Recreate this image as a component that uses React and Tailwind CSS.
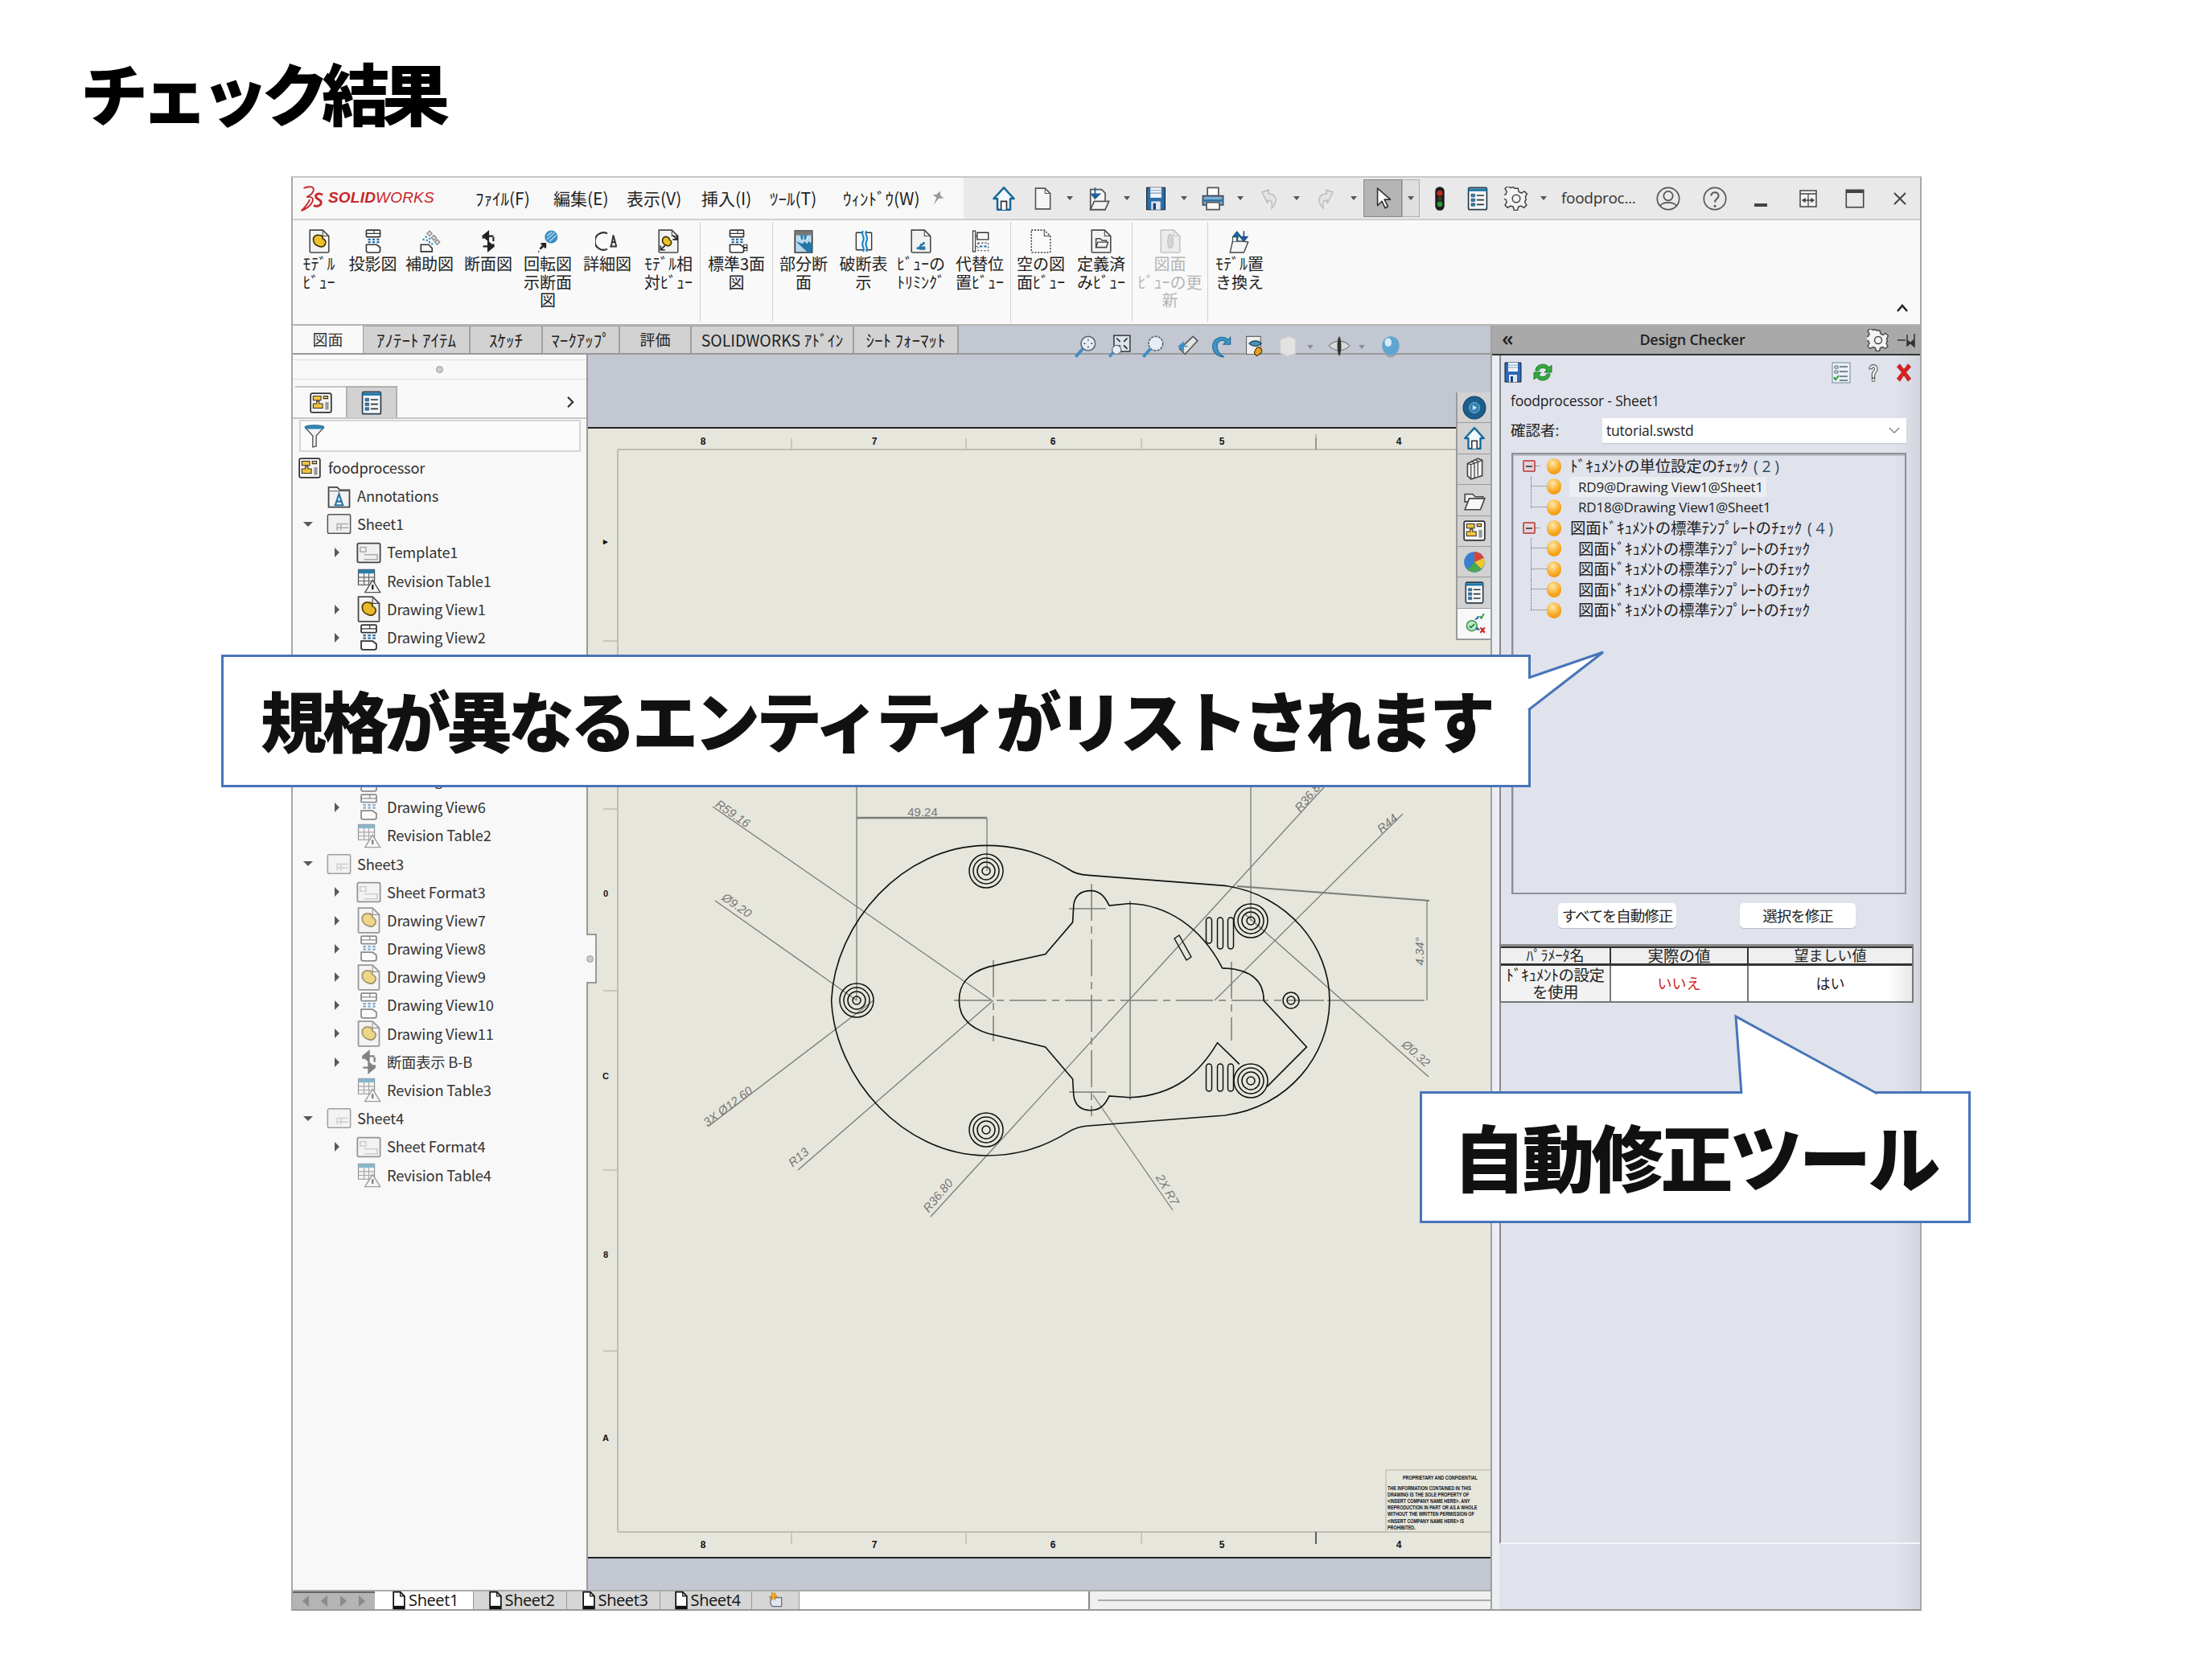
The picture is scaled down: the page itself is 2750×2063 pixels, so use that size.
import { Fragment } from 'react';

// toolbar and tree pictures, all drawn on a 28x28 grid
const docPath = 'M3 1h15l7 7v18a1 1 0 0 1-1 1H4a1 1 0 0 1-1-1z';
const blob = 'M7 12c0-4 4-6 7-5 3 0 4 2 4 4 3 1 4 4 3 6-1 3-4 4-7 3-4-1-7-4-7-8z';
const Doc = ({ fill = '#f2f2f2', stroke = '#4a4a4a', dash }) => (
    <>
        <path d={docPath} fill={fill} stroke={stroke} strokeWidth="1.5" strokeDasharray={dash} />
        <path d="M18 1v7h7" fill="none" stroke={stroke} strokeWidth="1" />
    </>
);
const ProjShape = ({ dash }) => (
    <>
        <rect x="6" y="1" width="16" height="8" rx="1" fill="#fff" stroke="#333" strokeWidth="1.5" strokeDasharray={dash} />
        <path d="M6 5h16M15 1v4" stroke="#333" strokeWidth="1" />
        <path d="M8 12h3M13 12h3M18 12h3M8 15h3M13 15h3M18 15h3" stroke="#2b6ea8" strokeWidth="2" />
        <path d="M6 18h12l4 3v4a2 2 0 0 1-2 2H8a2 2 0 0 1-2-2z" fill="#fff" stroke="#333" strokeWidth="1.5" strokeDasharray={dash} />
    </>
);
const SectionShape = () => (
    <>
        <path d="M20 8H12M14 3 8 8l6 5z" fill="#222" stroke="#222" strokeWidth="2" />
        <path d="M8 20h8M14 15l6 5-6 5z" fill="#222" stroke="#222" strokeWidth="2" />
        <path d="M20 9v5M20 17v3M8 9v2" stroke="#222" strokeWidth="2" />
    </>
);
const AssemblyMark = () => (
    <>
        <rect x="2" y="3" width="24" height="22" rx="2" fill="#f4f4f4" stroke="#333" strokeWidth="1.6" />
        <path d="M5 6h9v5H5zM17 6h5v3h-5z" fill="#f3c33c" stroke="#333" strokeWidth="1" />
        <path d="M9 12h3v3h4v5H5v-5h4z" fill="#f3c33c" stroke="#333" strokeWidth="1" />
        <path d="M19 13h4v9h-4z" fill="#999" />
    </>
);
const ListMark = () => (
    <>
        <rect x="4" y="2" width="20" height="24" rx="1.5" fill="#f4f7fa" stroke="#2c3e50" strokeWidth="1.5" />
        <path d="M4 3h20v3H4z" fill="#1f77a8" />
        <path d="M7 9h4v3H7zM7 14h4v3H7zM7 19h4v3H7z" fill="#2f7fb5" stroke="#234" strokeWidth=".5" />
        <path d="M13 10.500h8M13 15.500h8M13 20.500h8" stroke="#333" strokeWidth="1.5" />
    </>
);
const Floppy = ({ blue }) => (
    <>
        <path d="M4 2h20v24H4z" fill={blue ? '#2d69b8' : '#2e6fa8'} stroke="#123" strokeWidth="1" />
        <path d="M8 2h12v11H8z" fill="#f2f6fb" />
        <path d="M8 5h12M8 8h12" stroke="#7d9bc0" strokeWidth="1" />
        <path d="M9 17h10v9H9z" fill="#dfe7f1" />
        <path d="M11 19h3v7h-3z" fill="#1c3f73" />
    </>
);
const GearShape = () => (
    <>
        <path d="M12 2h4l1 4 3 1.500 3.500-2 3 3-2 3.500L25.500 15l0 0 0 0 .5 0-1 .5-1 2.500 2 3.500-3 3-3.500-2-3 1-1 4h-4l-1-4-3-1-3.500 2-3-3 2-3.500-1-3-4-1v-4l4-1 1-3-2-3.500 3-3 3.500 2 3-1z" fill="#f3f3f3" stroke="#444" strokeWidth="1.4" />
        <circle cx="14" cy="14" r="4.500" fill="#f3f3f3" stroke="#444" strokeWidth="1.4" />
    </>
);

const ICONS = {
    model: <><Doc /><path d={blob} fill="#edc02a" stroke="#3a2c00" strokeWidth="1.500" /></>,
    proj: <ProjShape />,
    aux: <><path d="M14 2l3 3-3 3-3-3zM19 7l3 3-3 3-3-3zM23 12l3 3-3 3-3-3z" fill="#ddd" stroke="#777" /><path d="M9 9h2M6 12h2M10 13h2M13 11h2M13 15h2M16 17h2" stroke="#2b85b8" strokeWidth="2" /><path d="M4 18h9l4 4v4H4z" fill="#f7f7f7" stroke="#333" strokeWidth="1.500" /></>,
    section: <SectionShape />,
    rotate: <><circle cx="18" cy="9" r="7.500" fill="#3c8ec4" /><path d="M13 8l6-5M13 12l9-8M16 14l8-7" stroke="#bfe0f3" strokeWidth="1.200" /><path d="M11 17l-6 6M6 17h5v5" fill="none" stroke="#222" strokeWidth="2.500" /><path d="M3 26h2" stroke="#222" strokeWidth="2" strokeDasharray="1 1" /></>,
    detail: <><path d="M14 5a10 10 0 1 0 0 18" fill="none" stroke="#333" strokeWidth="2" /><path d="M17 20h8M18.500 20 21 7l3.500 13M19.500 15h4" fill="none" stroke="#333" strokeWidth="1.800" /></>,
    relative: <><Doc /><path d="M7 13c0-3 3-5 5-4 2 0 3 2 3 3 2 1 3 3 2 5-1 2-3 3-5 2-3-1-5-3-5-6z" fill="#edc02a" stroke="#3a2c00" strokeWidth="1.500" /><path d="M19 7l5 5M24 7v5h-5M5 24l5-5M5 19v5h5" fill="none" stroke="#222" strokeWidth="1.500" /></>,
    std3: <><ProjShape /><path d="M22 18h4v3h-4zM22 22h4v3h-4z" fill="none" stroke="#333" /></>,
    broken: <><path d="M4 2h20v25H4z" fill="#b9d8ea" stroke="#333" strokeWidth="1.500" /><path d="M4 2h20v5H4z" fill="#777" /><path d="M9 7h10l-2 5h-6z" fill="#2b7fb0" /><path d="M5 14l14 13h5V17l-4-3-2 3-3-3-2 3z" fill="#2576a8" /><path d="M10 8v4M14 8v4M18 8v4" stroke="#fff" /></>,
    brk: <><path d="M5 4h8M5 24h8M16 4h7M16 24h7M5 4v20M23 4v20" fill="none" stroke="#333" strokeWidth="1.300" /><path d="M13 2c-3 4 3 7 0 12s3 8 0 12M17 2c-3 4 3 7 0 12s3 8 0 12" fill="none" stroke="#1e88c4" strokeWidth="2" /></>,
    crop: <><Doc /><path d="M9 22h4v-4h4v-4" fill="none" stroke="#2374ab" strokeWidth="2.500" strokeDasharray="3 1" /><path d="M12 20h7v4h-7z" fill="#2374ab" /></>,
    alt: <><path d="M6 2h3v24H6z" fill="#eee" stroke="#333" /><path d="M11 4h13v8H11z" fill="#f7f7f7" stroke="#333" strokeWidth="1.300" /><path d="M9 8h2M9 20h2" stroke="#333" /><path d="M12 16h12v9H12z" fill="#f7f7f7" stroke="#333" strokeDasharray="2 2" /><path d="M14 20h3M19 20h3" stroke="#2b7fb0" strokeWidth="2" /></>,
    empty: <Doc fill="#fafafa" dash="2 1.500" />,
    predefined: <><Doc /><path d="M8 11h5l2 2h5v8H8z" fill="#f5f5f5" stroke="#444" strokeWidth="1.300" /><path d="M8 21l2-6h12l-2 6z" fill="#f5f5f5" stroke="#444" strokeWidth="1.300" /></>,
    update: <><Doc stroke="#c6c6c6" fill="#ececec" /><path d="M14 6c2 0 3 3 3 8s-1 8-3 8-3-3-3-8 1-8 3-8z" fill="#d5d5d5" stroke="#bbb" /></>,
    replace: <><path d="M6 14h12l6 1-5 12H3z" fill="#f6f6f6" stroke="#444" strokeWidth="1.300" /><path d="M6 14V9h6v5" fill="#eee" stroke="#444" /><path d="M11 15V5M7 8l4-5 4 5z" fill="#2b7fb0" stroke="#1b5e85" strokeWidth="1.500" /><path d="M19 2v10M15 9l4 5 4-5z" fill="#3c6db5" stroke="#1b4c85" strokeWidth="1.500" /></>,
    home: <><path d="M14 2 3 14h4v12h14V14h4z" fill="#f2f7fb" stroke="#14689a" strokeWidth="2.200" strokeLinejoin="round" /><path d="M11 26v-9h6v9" fill="#fff" stroke="#333" strokeWidth="1.500" /></>,
    newdoc: <><path d="M6 2h11l6 6v18H6z" fill="#f6f6f6" stroke="#555" strokeWidth="1.500" /><path d="M17 2v6h6" fill="none" stroke="#555" /></>,
    open: <><path d="M5 4h12l4 4v18H5z" fill="#f7f7f7" stroke="#555" strokeWidth="1.500" /><path d="M10 2v10M6 9l4 5 5-5z" fill="#245f9e" stroke="#245f9e" strokeWidth="1.500" /><path d="M5 26l4-9h16l-4 9z" fill="#f4f4f4" stroke="#555" strokeWidth="1.500" /></>,
    save: <Floppy />,
    print: <><path d="M8 2h12v9H8z" fill="#fff" stroke="#555" strokeWidth="1.500" /><path d="M3 11h22v10H3z" fill="#76b0d4" stroke="#445" strokeWidth="1.500" /><path d="M3 16h22" stroke="#2f6d9c" strokeWidth="2" /><path d="M7 18h14v8H7z" fill="#f8f8f8" stroke="#555" strokeWidth="1.500" /></>,
    undo: <path d="M6 6l8-3v5c6 0 10 4 9 9-1 4-3 7-5 9 1-7 0-10-5-10v4z" fill="#e4e4e4" stroke="#bdbdbd" strokeWidth="1.500" />,
    redo: <path d="M22 6l-8-3v5c-6 0-10 4-9 9 1 4 3 7 5 9-1-7 0-10 5-10v4z" fill="#e4e4e4" stroke="#bdbdbd" strokeWidth="1.500" />,
    cursor: <path d="M8 2v20l5-5 4 8 3-2-4-8h7z" fill="#fdfdfd" stroke="#333" strokeWidth="1.500" strokeLinejoin="round" />,
    traffic: <><rect x="9" y="1" width="10" height="26" rx="5" fill="#1c1c1c" /><circle cx="14" cy="8" r="3" fill="#c8281e" /><circle cx="14" cy="14" r="2.500" fill="#3a3a1a" /><circle cx="14" cy="20" r="3" fill="#2a9a3a" /></>,
    list: <ListMark />,
    gear: <GearShape />,
    user: <><circle cx="14" cy="14" r="12" fill="none" stroke="#555" strokeWidth="1.500" /><circle cx="14" cy="11" r="5" fill="none" stroke="#555" strokeWidth="1.500" /><path d="M5 22c3-5 15-5 18 0" fill="none" stroke="#555" strokeWidth="1.500" /></>,
    help: <><circle cx="14" cy="14" r="12" fill="none" stroke="#555" strokeWidth="1.500" /><path d="M10 11c0-5 8-5 8 0 0 3-4 3-4 7" fill="none" stroke="#555" strokeWidth="1.800" /><circle cx="14" cy="22" r="1.300" fill="#555" /></>,
    split: <><rect x="4" y="4" width="20" height="20" fill="#f3f3f3" stroke="#444" strokeWidth="1.500" /><path d="M4 8h20M14 8v16M7 16h14M7 16l3-2v4zM21 16l-3-2v4z" stroke="#444" strokeWidth="1.300" /></>,
    maxi: <><rect x="4" y="4" width="20" height="20" fill="none" stroke="#444" strokeWidth="1.500" /><path d="M4 6h20" stroke="#444" strokeWidth="3" /></>,
    pin: <path d="M18 2l2 8 5 3-9 1-7 10 4-12-6-4 7-1z" fill="#9a9a9a" />,
    zoomFit: <><circle cx="17" cy="11" r="8" fill="#e6edf5" stroke="#5b6b7a" strokeWidth="1.500" /><path d="M11 17 3 26" stroke="#3f8fc4" strokeWidth="3.500" /><path d="M17 6v2M17 14v2M12 11h2M20 11h2" stroke="#555" strokeWidth="1.300" /></>,
    zoomBox: <><rect x="8" y="2" width="18" height="18" fill="#dde4ec" stroke="#444" strokeWidth="1.500" /><path d="M11 5l4 4M23 5l-4 4M11 17l4-4M23 17l-4-4" stroke="#222" strokeWidth="1.500" /><circle cx="11" cy="18" r="5" fill="#e6edf5" stroke="#5b6b7a" /><path d="M7 21l-4 5" stroke="#3f8fc4" strokeWidth="3" /></>,
    zoomSel: <><circle cx="17" cy="11" r="8" fill="#e6edf5" stroke="#5b6b7a" strokeWidth="1.500" strokeDasharray="3 1" /><path d="M11 17 3 26" stroke="#3f8fc4" strokeWidth="3.500" /></>,
    prev: <><path d="M21 3l5 5-14 15-6-6z" fill="#e5e5e5" stroke="#555" strokeWidth="1.400" /><path d="M15 14H6M10 10l-5 4 5 5z" fill="#3f8fc4" stroke="#3f8fc4" strokeWidth="1.500" /></>,
    rebuild: <path d="M23 7C15 0 5 6 5 14s7 12 13 12c-6-3-8-7-8-12s5-9 10-5l-3 3h8V4z" fill="#3d97c9" stroke="#1f6a96" strokeWidth="1" />,
    display: <><path d="M5 3h16v20H5z" fill="#eee" stroke="#666" /><path d="M8 11c4-4 10-4 14 0-4 4-10 4-14 0z" fill="#4a8fbf" stroke="#245" /><path d="M18 15c4 1 5 3 4 6l-5 4c-2-1-3-2-3-4 1-3 2-5 4-6z" fill="#e0a526" stroke="#5a3c00" /></>,
    cube: <path d="M5 7l10-4 8 3v17l-10 3-8-4z" fill="#e2e2e2" stroke="#cfcfcf" strokeWidth="1.500" />,
    eye: <><path d="M2 14c6-7 18-7 24 0-6 7-18 7-24 0z" fill="#d9d9d9" stroke="#777" /><path d="M14 3c3 3 3 19 0 23-3-4-3-20 0-23z" fill="#333" /></>,
    globe: <><ellipse cx="14" cy="13" rx="10" ry="11" fill="#5fa5cf" /><ellipse cx="11" cy="9" rx="4" ry="5" fill="#d6eaf5" /><path d="M9 23c3 3 7 3 10 0" stroke="#8fa0ad" strokeWidth="2" fill="none" /></>,
    rail1: <><circle cx="14" cy="14" r="13" fill="#1c5f8c" stroke="#0d3d5e" strokeWidth="1" /><circle cx="14" cy="14" r="6" fill="#2f7fb0" stroke="#8fc4e2" strokeWidth=".8" /><path d="M12 11l5 3-5 3z" fill="#cfe6f3" /></>,
    rail3: <><path d="M6 8l12-6 5 2v18l-13 4-4-4z" fill="#f3f3f3" stroke="#444" strokeWidth="1.500" /><path d="M10 9v17M14 7v17M18 5v17M6 8l4 1 13-5M10 5l4 2M14 3l4 2" fill="none" stroke="#444" strokeWidth="1.200" /></>,
    rail4: <><path d="M3 7h9l3 3h9v6H3z" fill="#eee" stroke="#444" strokeWidth="1.500" /><path d="M3 25l5-13h18l-5 13z" fill="#f7f7f7" stroke="#444" strokeWidth="1.500" /></>,
    annot: <><path d="M3 5h9l3 3h10v18H3z" fill="#f2f2f2" stroke="#444" strokeWidth="1.500" /><path d="M3 9h22" stroke="#777" /><path d="M9 24h10M10 24l4-12 4 12M11.500 20h5" fill="none" stroke="#2474a8" strokeWidth="1.800" /></>,
    rail6: <><circle cx="14" cy="14" r="12" fill="#3b7fd0" /><path d="M14 14V2a12 12 0 0 1 11 7z" fill="#d9443a" /><path d="M14 14l11-5a12 12 0 0 1-3 13z" fill="#f2c72c" /><path d="M14 14l8 8a12 12 0 0 1-16 1z" fill="#4aa84c" /></>,
    rail8: <><circle cx="11" cy="17" r="6" fill="#bfe6c4" stroke="#3f9a52" strokeWidth="1.500" /><path d="M8 17l2 2 4-4" fill="none" stroke="#1e7a34" strokeWidth="1.500" /><path d="M15 10l4-4M18 6v3M20 22l-3-3M17 22v-3" stroke="#2458b8" strokeWidth="1.500" /><path d="M20 6l2 2 3-5" fill="none" stroke="#2c9a3a" strokeWidth="1.800" /><path d="M21 19l5 6M26 19l-5 6" stroke="#d2201c" strokeWidth="2" /></>,
    funnel: <><path d="M3 4c0-3 22-3 22 0L16 14v12l-4 1V14z" fill="#f3f3f3" stroke="#555" strokeWidth="1.300" /><path d="M3 3c3-2 19-2 22 0v3H3z" fill="#2d86b3" /></>,
    sheet: <><rect x="2" y="4" width="24" height="20" rx="1.500" fill="#f0f0f0" stroke="#555" strokeWidth="1.300" /><path d="M12 21v-7h12M16 14v7M12 18h12" fill="none" stroke="#aaa" strokeWidth="1.200" /></>,
    tmpl: <><rect x="2" y="4" width="24" height="20" rx="1.500" fill="#f0f0f0" stroke="#444" strokeWidth="1.500" /><path d="M5 8h6v5h-6zM9 21h14v-5H9" fill="none" stroke="#aaa" strokeWidth="1.300" /></>,
    revtab: <><path d="M3 2h17v16H3z" fill="#f2f2f2" stroke="#444" /><path d="M3 2h17v4H3z" fill="#2d7fa8" /><path d="M3 10h17M3 14h17M9 6v12M14 6v12" stroke="#666" /><path d="M18 13l8 13H10z" fill="#f7f7f7" stroke="#555" strokeWidth="1.200" /><path d="M18 18v5" stroke="#222" strokeWidth="2" /></>,
    dview: <><Doc /><path d={blob} fill="#e8b92a" stroke="#5a4300" strokeWidth="1.500" /></>,
    saveBlue: <Floppy blue />,
    refresh: <><path d="M5 12C5 4 17 1 22 8l3-3v9h-9l3-3C16 7 10 8 9 12z" fill="#35a83e" stroke="#1c7a28" /><path d="M23 16c0 8-12 11-17 4l-3 3v-9h9l-3 3c3 4 9 3 10-1z" fill="#35a83e" stroke="#1c7a28" /></>,
    checkList: <><rect x="3" y="2" width="22" height="25" fill="#e8f0f6" stroke="#789" strokeWidth="1" /><path d="M6 6h4v3H6zM6 12h4v3H6z" fill="none" stroke="#566" /><path d="M12 7h10M12 13h10M12 19h10M12 24h10" stroke="#567" strokeWidth="1.300" /><path d="M5 20l2 3 4-5" fill="none" stroke="#2c9a3a" strokeWidth="2" /></>,
    question: <><path d="M8 9c0-8 12-8 12 0 0 5-4 5-4 9v4h-4v-6c0-3 4-4 4-7 0-3-4-3-4 0z" fill="#f5f5f5" stroke="#555" strokeWidth="1.300" /><rect x="12" y="23" width="4" height="4" fill="#f5f5f5" stroke="#555" /></>,
    cross: <path d="M4 6l4-4 6 8 6-8 4 4-7 8 7 9-4 4-6-9-6 9-4-4 7-9z" fill="#e01f1f" stroke="#9b1010" strokeWidth=".8" />,
    pageTab: <><path d="M6 2h10l6 6v18H6z" fill="#fff" stroke="#111" strokeWidth="2" /><path d="M16 2v6h6" fill="none" stroke="#111" strokeWidth="1.500" /><path d="M6 22h16v4H6z" fill="#111" /></>,
    newTab: <><path d="M7 10h16v13H10l-3-3z" fill="#dfe7ef" stroke="#667" strokeWidth="1.400" /><path d="M9 2l2 3 3-2-1 4 4 1-4 2 1 4-3-3-3 3 1-4-4-1 4-2z" fill="#f2a818" stroke="#c46f00" strokeWidth=".7" /></>
};

function Icon({ name, className = 'w-[30px] h-[30px]' }) {
    return (
        <svg viewBox="0 0 28 28" className={`${className} shrink-0`}>
            {name === 'assembly' ? <AssemblyMark /> : ICONS[name]}
        </svg>
    );
}

const Caret = ({ className = '' }) => (
    <span className={`w-0 h-0 border-x-[4px] border-x-transparent border-t-[5px] border-t-[#555] ${className}`} />
);

const MENU = [
    ['ﾌｧｲﾙ(F)', 'w-[97px]'],
    ['編集(E)', 'w-[91px]'],
    ['表示(V)', 'w-[93px]'],
    ['挿入(I)', 'w-[85px]'],
    ['ﾂｰﾙ(T)', 'w-[91px]'],
    ['ｳｨﾝﾄﾞｳ(W)', 'w-[118px]']
];

const RIBBON = [
    [
        ['model', ['ﾓﾃﾞﾙ', 'ﾋﾞｭｰ'], 'w-[65px]'],
        ['proj', ['投影図'], 'w-[69px]'],
        ['aux', ['補助図'], 'w-[72px]'],
        ['section', ['断面図'], 'w-[74px]'],
        ['rotate', ['回転図', '示断面', '図'], 'w-[74px]'],
        ['detail', ['詳細図'], 'w-[74px]'],
        ['relative', ['ﾓﾃﾞﾙ相', '対ﾋﾞｭｰ'], 'w-[78px]']
    ],
    [['std3', ['標準3面', '図'], 'w-[89px]']],
    [
        ['broken', ['部分断', '面'], 'w-[76px]'],
        ['brk', ['破断表', '示'], 'w-[73px]'],
        ['crop', ['ﾋﾞｭｰの', 'ﾄﾘﾐﾝｸﾞ'], 'w-[70px]'],
        ['alt', ['代替位', '置ﾋﾞｭｰ'], 'w-[76px]']
    ],
    [
        ['empty', ['空の図', '面ﾋﾞｭｰ'], 'w-[74px]'],
        ['predefined', ['定義済', 'みﾋﾞｭｰ'], 'w-[76px]']
    ],
    [['update', ['図面', 'ﾋﾞｭｰの更', '新'], 'w-[93px]', true]],
    [['replace', ['ﾓﾃﾞﾙ置', 'き換え'], 'w-[78px]']]
];

const TABS = [
    ['ｱﾉﾃｰﾄ ｱｲﾃﾑ', 'w-[133px] text-[21px]'],
    ['ｽｹｯﾁ', 'w-[90px] text-[21px]'],
    ['ﾏｰｸｱｯﾌﾟ', 'w-[96px] text-[21px]'],
    ['評価', 'w-[89px] text-[19px]'],
    ['SOLIDWORKS ｱﾄﾞｲﾝ', 'w-[202px] text-[19.500px]'],
    ['ｼｰﾄ ﾌｫｰﾏｯﾄ', 'w-[130px] text-[21px]']
];

// depth, caret, icon, label, faded
const TREE_TOP = [
    [0, false, 'assembly', 'foodprocessor'],
    [1, false, 'annot', 'Annotations'],
    [1, 'down', 'sheet', 'Sheet1'],
    [2, 'right', 'tmpl', 'Template1'],
    [2, false, 'revtab', 'Revision Table1'],
    [2, 'right', 'dview', 'Drawing View1'],
    [2, 'right', 'proj', 'Drawing View2']
];
const TREE_BOTTOM = [
    [2, 'right', 'proj', 'Drawing View5', true],
    [2, 'right', 'proj', 'Drawing View6', true],
    [2, false, 'revtab', 'Revision Table2', true],
    [1, 'down', 'sheet', 'Sheet3', true],
    [2, 'right', 'tmpl', 'Sheet Format3', true],
    [2, 'right', 'dview', 'Drawing View7', true],
    [2, 'right', 'proj', 'Drawing View8', true],
    [2, 'right', 'dview', 'Drawing View9', true],
    [2, 'right', 'proj', 'Drawing View10', true],
    [2, 'right', 'dview', 'Drawing View11', true],
    [2, 'right', 'section', '断面表示 B-B', true],
    [2, false, 'revtab', 'Revision Table3', true],
    [1, 'down', 'sheet', 'Sheet4', true],
    [2, 'right', 'tmpl', 'Sheet Format4', true],
    [2, false, 'revtab', 'Revision Table4', true]
];

const TEMPLATE_CHECK = '図面ﾄﾞｷｭﾒﾝﾄの標準ﾃﾝﾌﾟﾚｰﾄのﾁｪｯｸ';
const CHECKS = [
    ['group', 'ﾄﾞｷｭﾒﾝﾄの単位設定のﾁｪｯｸ', '( 2 )'],
    ['item', 'RD9@Drawing View1@Sheet1', null, 'selected'],
    ['last', 'RD18@Drawing View1@Sheet1'],
    ['group', TEMPLATE_CHECK, '( 4 )'],
    ['item', TEMPLATE_CHECK],
    ['item', TEMPLATE_CHECK],
    ['item', TEMPLATE_CHECK],
    ['last', TEMPLATE_CHECK]
];

function TreeRow({ row }) {
    const [depth, caret, icon, label, faded] = row;
    return (
        <div className={`flex items-center h-[35.200px] ${depth === 0 ? 'pl-[7px]' : depth === 1 ? 'pl-[11px]' : 'pl-[48px]'}`}>
            {depth > 0 && (
                <span className="w-[30px] flex items-center justify-start pl-[2px]">
                    {caret === 'down' && <span className="w-0 h-0 border-x-[6px] border-x-transparent border-t-[6px] border-t-[#5a5a5a]" />}
                    {caret === 'right' && <span className="w-0 h-0 border-y-[6px] border-y-transparent border-l-[6px] border-l-[#5a5a5a] ml-[2px]" />}
                </span>
            )}
            <span className={`flex justify-center ${depth === 0 ? 'w-[28px] mr-[9px]' : 'w-[32px] mr-[7px]'} ${faded ? 'opacity-55' : ''}`}>
                <Icon name={icon} className={depth === 0 ? 'w-[30px] h-[30px]' : 'w-[33px] h-[33px]'} />
            </span>
            <span className="text-[18.300px] tracking-[-0.2px] text-[#333] whitespace-nowrap">{label}</span>
        </div>
    );
}

function CheckRow({ row }) {
    const [kind, label, count, selected] = row;
    const isGroup = kind === 'group';
    const latin = label.startsWith('RD');
    return (
        <div className="flex items-center h-[25.600px]">
            {isGroup ? (
                <span className="w-[42px] pl-[12px] flex items-center">
                    <span className="w-[16px] h-[15px] border-2 border-[#c45a5a] bg-[#e4d3d8] rounded-[2px] flex items-center justify-center">
                        <span className="w-[8px] h-[2px] bg-[#555]" />
                    </span>
                    <span className="w-[6px] border-t border-dotted border-[#777]" />
                </span>
            ) : (
                <span className="w-[42px] h-full pl-[22px]">
                    <span className={`block w-[20px] h-1/2 border-l border-b border-dotted border-[#666] ${kind === 'last' ? '' : 'relative after:absolute after:left-[-1px] after:top-full after:h-[13px] after:border-l after:border-dotted after:border-[#666]'}`} />
                </span>
            )}
            <span className="w-[18px] h-[20px] rounded-full bg-[radial-gradient(circle_at_40%_30%,#ffe9a8,#f7a51c_60%,#ea8a08)]" />
            <span className={`${isGroup ? 'ml-[11px]' : selected ? 'ml-[10px] pl-[11px] pr-[4px] h-full bg-[#eceef1] flex items-center' : 'ml-[21px]'} ${latin ? 'text-[17px]' : 'text-[19.500px]'} tracking-[-0.2px] text-[#222] whitespace-nowrap`}>
                {label}
                {count && <span className="ml-[7px] text-[#2f4a5e]">{count}</span>}
            </span>
        </div>
    );
}

// 図面シート: all lines and labels are the drawing itself
function SheetDrawing() {
    const edges = [874, 1087, 1309, 1519, 1739];
    const labels = ['8', '7', '6', '5', '4'];
    const sides = [[677, '▸'], [1115, '0'], [1342, 'C'], [1564, '8'], [1792, 'A']];
    const bosses = [[1226, 1083], [1226, 1405], [1065, 1244], [1555, 1145], [1555, 1344]];
    const slots = [[1503, 1141, 32], [1517, 1141, 39], [1530, 1141, 39], [1503, 1323, 34], [1517, 1323, 34], [1530, 1323, 34]];
    const leaders = [
        [1065, 979, 1065, 1244], [1555, 979, 1555, 1145], [1227, 1017, 1227, 1083], [886, 1003, 1233, 1244],
        [889, 1120, 1065, 1244], [880, 1401, 1086, 1244], [992, 1455, 1235, 1244], [1157, 1513, 1646, 979],
        [1510, 1244, 1744, 1012], [1547, 1136, 1776, 1339], [1359, 1362, 1458, 1505], [1774, 1120, 1774, 1244], [1771, 1244, 1650, 1244]
    ];
    const dims = [
        ['R59.16', 908, 1016, 35], ['Ø9.20', 913, 1130, 35], ['3X Ø12.60', 908, 1380, -37], ['R13', 996, 1443, -40],
        ['R36.80', 1170, 1490, -50], ['R36.80', 1632, 992, -50], ['R44', 1728, 1028, -40], ['Ø0.32', 1757, 1314, 42], ['2X R7', 1447, 1482, 60]
    ];
    const block = [
        'THE INFORMATION CONTAINED IN THIS', 'DRAWING IS THE SOLE PROPERTY OF', '<INSERT COMPANY NAME HERE>. ANY',
        'REPRODUCTION IN PART OR AS A WHOLE', 'WITHOUT THE WRITTEN PERMISSION OF', '<INSERT COMPANY NAME HERE> IS', 'PROHIBITED.'
    ];
    return (
        <svg viewBox="731 533 1122 1405" className="block w-[1122px] h-[1405px]">
            <path d="M768 559H1853M768 559V1905M768 1905H1853" fill="none" stroke="#bdbdb5" strokeWidth="2" />
            {[984, 1201, 1419, 1636].map((x) => (
                <Fragment key={x}>
                    <path d={`M${x} 545V559M${x} 1905V1920`} stroke={x === 1636 ? '#333' : '#bdbdb5'} strokeWidth="1.500" />
                </Fragment>
            ))}
            <path d="M1636 540V559" stroke="#a8a8a0" strokeWidth="1.500" />
            <path d="M750 797H768M750 1006H768M750 1232H768M750 1455H768M750 1680H768" stroke="#bdbdb5" strokeWidth="1.500" />
            {edges.map((x, i) => (
                <Fragment key={x}>
                    <text x={x} y="553" textAnchor="middle" fontSize="12" fontWeight="700" fill="#111" fontFamily="Liberation Sans">{labels[i]}</text>
                    <text x={x} y="1925" textAnchor="middle" fontSize="12" fontWeight="700" fill="#111" fontFamily="Liberation Sans">{labels[i]}</text>
                </Fragment>
            ))}
            {sides.map(([y, t]) => (
                <text key={y} x="753" y={y} textAnchor="middle" fontSize="11" fontWeight="700" fill="#111" fontFamily="Liberation Sans">{t}</text>
            ))}
            <g stroke="#7c7c78" strokeWidth="1.300">
                {leaders.map((l, i) => <line key={i} x1={l[0]} y1={l[1]} x2={l[2]} y2={l[3]} />)}
                <path d="M1065 1017H1227" strokeWidth="2.500" />
                <path d="M1538 1102L1777 1120" strokeWidth="2" />
            </g>
            <g stroke="#7c7c78" strokeWidth="1.500" strokeDasharray="46 7 9 7" fill="none">
                <path d="M1186 1244H1650" />
                <path d="M1235 1194V1295M1357 1099V1388M1531 1196V1294M1329 1130H1382M1329 1358H1382" />
                <path d="M1405 1120V1368" strokeDasharray="none" />
            </g>
            <g fill="none" stroke="#111" strokeWidth="1.600" transform="translate(850 970) scale(0.606 0.37)">
                <path vectorEffect="non-scaling-stroke" d="M303 741C310 480 450 222 620 220C690 220 740 250 790 300C800 312 810 318 830 320L1110 355C1240 385 1325 560 1325 741C1325 925 1240 1100 1110 1127L830 1162C810 1164 800 1172 790 1182C740 1232 690 1262 620 1262C450 1260 310 1000 303 741Z" />
                <path vectorEffect="non-scaling-stroke" d="M565 741C565 690 580 650 625 628L742 585L798 478L800 420C803 385 815 372 835 372C855 372 865 395 873 422L915 415C990 420 1060 490 1105 632C1160 635 1190 670 1190 741L1278 897L1197 1030M1140 955L1095 883C1060 980 1010 1060 915 1067L873 1062C865 1090 855 1110 835 1110C815 1110 803 1095 800 1060L798 1005L742 897L625 852C580 830 565 790 565 741" />
            </g>
            <g fill="none" stroke="#111" strokeWidth="1.500">
                {bosses.map(([x, y]) => (
                    <Fragment key={x + y}>
                        <circle cx={x} cy={y} r="21" />
                        <circle cx={x} cy={y} r="16" />
                        <circle cx={x} cy={y} r="11" />
                        <circle cx={x} cy={y} r="5" />
                    </Fragment>
                ))}
                <circle cx="1605" cy="1244" r="10" />
                <circle cx="1605" cy="1244" r="5" />
                {slots.map(([x, y, h]) => <rect key={x + y} x={x - 3.500} y={y} width="7" height={h} rx="3.500" />)}
                <path d="M1460 1167L1475 1194L1481 1190L1466 1163Z" strokeLinejoin="round" />
            </g>
            <g fontSize="15" fontFamily="Liberation Sans" fontStyle="italic" fill="#777">
                <text x="1147" y="1015" textAnchor="middle" fontStyle="normal">49.24</text>
                <text x="1770" y="1183" textAnchor="middle" transform="rotate(-90 1770 1183)">4.34°</text>
                {dims.map(([t, x, y, r], i) => (
                    <text key={i} x={x} y={y} textAnchor="middle" transform={`rotate(${r} ${x} ${y})`}>{t}</text>
                ))}
            </g>
            <path d="M1723 1905V1828H1853M1723 1905H1853" fill="none" stroke="#c2c2ba" strokeWidth="1.500" />
            <g fontFamily="Liberation Sans" fontWeight="700" fill="#111" fontSize="5.400">
                <text transform="translate(1744 1840) scale(1 1.500)">PROPRIETARY AND CONFIDENTIAL</text>
                {block.map((t, i) => (
                    <text key={t} transform={`translate(1725 ${1853 + i * 8.100}) scale(1 1.500)`}>{t}</text>
                ))}
            </g>
        </svg>
    );
}

function Callout({ className, children, tail, tailClass }) {
    return (
        <div className={`absolute bg-white border-[3px] border-[#4874b8] flex items-center justify-center font-black text-[#111] whitespace-nowrap ${className}`}>
            {children}
            <svg className={`absolute overflow-visible ${tailClass}`}>
                <polygon points={tail} fill="#fff" />
                <polyline points={tail} fill="none" stroke="#4874b8" strokeWidth="3" />
            </svg>
        </div>
    );
}

export default function App() {
    return (
        <div className="relative w-[2750px] h-[2063px] overflow-hidden bg-white font-['Noto_Sans_CJK_JP',sans-serif]">
            <div className="h-[219px] pl-[100px] pt-[64px]">
                <h1 className="text-[84px] leading-[100px] font-black tracking-[-9px] text-black">チェック結果</h1>
            </div>

            <div className="ml-[362px] w-[2027px] h-[1784px] border-2 border-t-[#c8c8c8] border-x-[#a8a8a8] border-b-[#9a9a9a] flex flex-col">
                {/* title bar */}
                <div className="h-[53px] flex border-b-2 border-[#cfcfcf]">
                    <div className="w-[834px] bg-[#f8f8f8] flex items-center">
                        <div className="w-[227px] pl-[6px] flex items-center">
                            <svg viewBox="0 0 34 36" className="w-[32px] h-[34px]">
                                <path d="M8 4c8-3 14-2 13 3-1 4-5 7-9 9 6-1 9 1 8 5-2 6-9 11-15 13 4-4 9-9 11-15" fill="none" stroke="#c8262c" strokeWidth="2" />
                                <path d="M33 13c-5-3-9-1-9 2 0 4 8 4 7 9-1 4-6 5-10 3" fill="none" stroke="#c8262c" strokeWidth="3" />
                            </svg>
                            <span className="ml-[6px] text-[19px] italic text-[#c8262c] font-['Liberation_Sans',sans-serif] tracking-[0.2px]">
                                <b>SOLID</b>WORKS
                            </span>
                        </div>
                        {MENU.map(([label, w]) => (
                            <span key={label} className={`${w} text-[21px] text-[#222] whitespace-nowrap`}>{label}</span>
                        ))}
                        <Icon name="pin" className="w-[22px] h-[22px] -ml-[12px]" />
                    </div>
                    <div className="flex-1 bg-[#e9e9e9] flex items-center pl-[34px]">
                        <Icon name="home" className="w-[32px] h-[32px]" />
                        <Icon name="newdoc" className="w-[30px] h-[30px] ml-[17px]" />
                        <Caret className="ml-[15px]" />
                        <Icon name="open" className="w-[32px] h-[32px] ml-[16px]" />
                        <Caret className="ml-[15px]" />
                        <Icon name="save" className="w-[32px] h-[32px] ml-[16px]" />
                        <Caret className="ml-[15px]" />
                        <Icon name="print" className="w-[32px] h-[32px] ml-[16px]" />
                        <Caret className="ml-[14px]" />
                        <Icon name="undo" className="w-[28px] h-[28px] ml-[17px]" />
                        <Caret className="ml-[17px]" />
                        <Icon name="redo" className="w-[28px] h-[28px] ml-[19px]" />
                        <Caret className="ml-[16px]" />
                        <span className="ml-[8px] w-[48px] h-[47px] bg-[#b5b5b5] border border-[#888] flex items-center justify-center">
                            <Icon name="cursor" className="w-[30px] h-[34px]" />
                        </span>
                        <span className="w-[22px] h-[47px] bg-[#dedede] border border-[#b0b0b0] flex items-center justify-center">
                            <Caret />
                        </span>
                        <Icon name="traffic" className="w-[32px] h-[32px] ml-[9px]" />
                        <Icon name="list" className="w-[32px] h-[32px] ml-[15px]" />
                        <Icon name="gear" className="w-[30px] h-[30px] ml-[17px]" />
                        <Caret className="ml-[15px]" />
                        <span className="ml-[18px] w-[117px] text-[19px] text-[#333] font-['Open_Sans',sans-serif] tracking-[-0.3px]">foodproc...</span>
                        <Icon name="user" className="w-[32px] h-[32px]" />
                        <Icon name="help" className="w-[32px] h-[32px] ml-[26px]" />
                        <span className="ml-[33px] w-[16px] h-[4px] mt-[16px] bg-[#444]" />
                        <Icon name="split" className="w-[28px] h-[28px] ml-[37px]" />
                        <Icon name="maxi" className="w-[30px] h-[30px] ml-[29px]" />
                        <svg viewBox="0 0 20 20" className="w-[20px] h-[20px] ml-[31px]">
                            <path d="M3 3l14 14M17 3L3 17" stroke="#444" strokeWidth="2" />
                        </svg>
                    </div>
                </div>

                {/* ribbon */}
                <div className="h-[131px] bg-[#f9f9f9] flex border-b-2 border-[#b4b4b4] relative pt-[2px]">
                    {RIBBON.map((group, g) => (
                        <div key={g} className={`h-[124px] flex ${g < RIBBON.length - 1 ? 'border-r border-[#d0d0d0]' : ''}`}>
                            {group.map(([icon, lines, w, disabled]) => (
                                <div key={icon} className={`${w} flex flex-col items-center pt-[9px]`}>
                                    <Icon name={icon} />
                                    <div className={`mt-[2px] text-[20px] leading-[22.500px] text-center whitespace-nowrap ${disabled ? 'text-[#b5b5b5]' : 'text-[#222]'}`}>
                                        {lines.map((l) => <div key={l}>{l}</div>)}
                                    </div>
                                </div>
                            ))}
                        </div>
                    ))}
                    <svg viewBox="0 0 16 12" className="absolute right-[14px] bottom-[14px] w-[16px] h-[12px]">
                        <path d="M2 10l6-7 6 7" fill="none" stroke="#222" strokeWidth="2.500" />
                    </svg>
                </div>

                <div className="flex-1 flex min-h-0">
                    {/* drawing area with feature tree */}
                    <div className="w-[1489px] flex flex-col">
                        <div className="h-[36px] flex bg-[#c3c7d2] border-b-2 border-[#999]">
                            <div className="w-[88px] bg-[#f9f9f9] text-[19px] text-[#333] flex items-center justify-center border-r border-[#999]">図面</div>
                            {TABS.map(([label, c]) => (
                                <div key={label} className={`${c} bg-[#d2d2d2] border-r-2 border-t border-[#a0a0a0] text-[#222] flex items-center justify-center whitespace-nowrap`}>
                                    {label}
                                </div>
                            ))}
                            <div className="relative z-10 flex-1 flex items-start gap-[11px] pl-[142px] pt-[10px]">
                                {['zoomFit', 'zoomBox', 'zoomSel', 'prev', 'rebuild', 'display'].map((n) => (
                                    <Icon key={n} name={n} className="w-[31px] h-[31px]" />
                                ))}
                                <Icon name="cube" className="w-[30px] h-[30px]" />
                                <Caret className="mt-[14px] -ml-[2px] opacity-50" />
                                <Icon name="eye" className="w-[30px] h-[30px] ml-[6px]" />
                                <Caret className="mt-[14px] -ml-[2px] opacity-50" />
                                <Icon name="globe" className="w-[30px] h-[32px] ml-[6px]" />
                            </div>
                        </div>

                        <div className="flex-1 flex min-h-0">
                            <div className="relative w-[367px] bg-[#f8f8f8] border-r-2 border-[#9a9a9a]">
                                <div className="h-[39px] pt-[6px]">
                                    <div className="h-[25px] mx-0 border-y border-[#dcdcdc] flex items-center justify-center">
                                        <span className="w-[9px] h-[9px] rounded-full bg-[#ccc] border border-[#999]" />
                                    </div>
                                </div>
                                <div className="h-[41px] flex items-stretch border-b-2 border-[#c6c6c6] pl-[3px] pr-[8px]">
                                    <div className="w-[63px] flex items-center justify-center border-t-2 border-[#c6c6c6]">
                                        <Icon name="assembly" className="w-[30px] h-[30px]" />
                                    </div>
                                    <div className="w-[64px] flex items-center justify-center bg-[#d2d2d2] border-2 border-b-0 border-[#b0b0b0]">
                                        <Icon name="list" className="w-[32px] h-[32px]" />
                                    </div>
                                    <div className="flex-1 flex items-center justify-end pr-[6px]">
                                        <svg viewBox="0 0 12 18" className="w-[11px] h-[16px]">
                                            <path d="M2 2l7 7-7 7" fill="none" stroke="#333" strokeWidth="2.500" />
                                        </svg>
                                    </div>
                                </div>
                                <div className="ml-[8px] w-[350px] h-[40px] mt-[1px] border-2 border-[#d6d6d6] bg-[#fbfbfb] flex items-center pl-[2px]">
                                    <Icon name="funnel" className="w-[30px] h-[30px]" />
                                </div>
                                <div className="mt-[2px]">
                                    {TREE_TOP.map((row) => <TreeRow key={row[3]} row={row} />)}
                                    {/* rows behind the callout */}
                                    <div className="h-[140.800px]" />
                                    {TREE_BOTTOM.map((row) => <TreeRow key={row[3]} row={row} />)}
                                </div>
                                <div className="absolute z-10 left-full top-[720px] w-[13px] h-[62px] bg-[#f8f8f8] border-2 border-l-0 border-[#9a9a9a] flex items-center">
                                    <span className="w-[9px] h-[9px] rounded-full bg-[#ccc] border border-[#999]" />
                                </div>
                            </div>

                            <div className="relative flex-1 flex flex-col bg-[#c3c7d2]">
                                <div className="h-[90px]" />
                                <div className="h-[1407px] bg-[#e6e6dd] border-y-2 border-[#222]">
                                    <SheetDrawing />
                                </div>
                                <div className="absolute right-0 top-[47px] w-[43px] flex flex-col border-l-2 border-[#9a9a9a]">
                                    {['rail1', 'home', 'rail3', 'rail4', 'assembly', 'rail6', 'list'].map((n) => (
                                        <div key={n} className="h-[38.400px] bg-[#d2d2d2] border-b border-[#9a9a9a] flex items-center justify-center">
                                            <Icon name={n} className="w-[30px] h-[32px]" />
                                        </div>
                                    ))}
                                    <div className="h-[39px] bg-[#f8f8f8] border-b-2 border-[#9a9a9a] flex items-center justify-center">
                                        <Icon name="rail8" className="w-[30px] h-[30px]" />
                                    </div>
                                </div>
                            </div>
                        </div>

                        {/* sheet tabs */}
                        <div className="h-[24px] flex bg-[#f0f0f0] border-t-2 border-[#aaa] text-[20px]">
                            <div className="w-[102px] bg-[#b4b4b4] border-t-2 border-[#666] flex items-center justify-around px-[4px]">
                                {['border-r-[8px] border-r-[#8a8a8a]', 'border-r-[8px] border-r-[#8a8a8a]', 'border-l-[8px] border-l-[#8a8a8a]', 'border-l-[8px] border-l-[#8a8a8a]'].map((c, i) => (
                                    <span key={i} className={`w-0 h-0 border-y-[7px] border-y-transparent ${c}`} />
                                ))}
                            </div>
                            {[['Sheet1', 'w-[123px] bg-white'], ['Sheet2', 'w-[116px] bg-[#d6d6d6]'], ['Sheet3', 'w-[116px] bg-[#d6d6d6]'], ['Sheet4', 'w-[114px] bg-[#d6d6d6]']].map(([label, c]) => (
                                <div key={label} className={`${c} border-r border-[#999] flex items-center justify-center text-[#111] font-['Open_Sans',sans-serif] tracking-[-0.4px] leading-none`}>
                                    <Icon name="pageTab" className="w-[24px] h-[24px]" />
                                    {label}
                                </div>
                            ))}
                            <div className="w-[59px] bg-[#d6d6d6] border-r border-[#999] flex items-center justify-center">
                                <Icon name="newTab" className="w-[24px] h-[24px]" />
                            </div>
                            <div className="w-[361px] bg-white border-r-2 border-[#888]" />
                            <div className="flex-1 pt-[10px] pl-[10px]">
                                <div className="border-t-2 border-[#aaa]" />
                            </div>
                        </div>
                    </div>

                    {/* Design Checker */}
                    <div className="flex-1 flex flex-col border-l-2 border-[#a0a0a0] bg-[#eceef3]">
                        <div className="h-[37px] bg-[#a9a9a9] border-b-2 border-[#333] flex items-center relative font-['Open_Sans',sans-serif]">
                            <span className="absolute left-[12px] top-[-2px] text-[26px] leading-[34px] text-[#222] font-semibold">«</span>
                            <span className="flex-1 pl-[32px] text-center text-[18px] font-semibold text-[#222] tracking-[-0.2px]">Design Checker</span>
                            <Icon name="gear" className="w-[28px] h-[28px] mr-[9px]" />
                            <svg viewBox="0 0 24 20" className="w-[24px] h-[20px] mr-[5px]">
                                <path d="M1 10h10M13 3v14l9-8V2v16l-9-8" fill="#333" stroke="#333" strokeWidth="1.500" />
                            </svg>
                        </div>
                        <div className="flex-1 flex flex-col pl-[9px]">
                            <div className="h-[1478px] border-l-2 border-b-2 border-l-[#888] border-b-[#f4f5f8] bg-[linear-gradient(to_right,#e0e3ec_94%,#d3d6de)] font-['Open_Sans','Noto_Sans_CJK_JP',sans-serif]">
                                <div className="h-[41px] flex items-center pl-[1px] pr-[8px]">
                                    <Icon name="saveBlue" className="w-[28px] h-[28px]" />
                                    <Icon name="refresh" className="w-[28px] h-[28px] ml-[9px]" />
                                    <span className="flex-1" />
                                    <Icon name="checkList" className="w-[28px] h-[28px]" />
                                    <Icon name="question" className="w-[24px] h-[28px] ml-[14px]" />
                                    <Icon name="cross" className="w-[24px] h-[26px] ml-[14px]" />
                                </div>
                                <div className="h-[30px] pl-[12px] flex items-center text-[17.500px] tracking-[-0.2px] text-[#222]">foodprocessor - Sheet1</div>
                                <div className="h-[38px] mt-[3px] pl-[12px] flex items-center text-[18.500px] text-[#222]">
                                    <span className="w-[114px]">確認者:</span>
                                    <div className="w-[378px] h-[31px] bg-white shadow-[0_1px_1px_#c4c7cf] flex items-center justify-between pl-[5px] pr-[8px] text-[17.500px] tracking-[-0.2px]">
                                        tutorial.swstd
                                        <svg viewBox="0 0 16 10" className="w-[14px] h-[9px]">
                                            <path d="M1 1l7 7 7-7" fill="none" stroke="#777" strokeWidth="1.300" />
                                        </svg>
                                    </div>
                                </div>
                                <div className="ml-[13px] mt-[9px] w-[491px] h-[549px] border-2 border-[#8e9096] pt-[2px] shadow-[inset_1px_2px_0_#b9bcc4]">
                                    {CHECKS.map((row, i) => <CheckRow key={i} row={row} />)}
                                </div>
                                <div className="flex mt-[11px] pl-[71px] gap-[79px] text-[18.500px] text-[#222]">
                                    <div className="w-[147px] h-[31px] bg-white rounded-[5px] shadow-[0_1px_1px_#b9bcc4] flex items-center justify-center tracking-[-1px]">すべてを自動修正</div>
                                    <div className="w-[144px] h-[31px] bg-white rounded-[5px] shadow-[0_1px_1px_#b9bcc4] flex items-center justify-center tracking-[-1px]">選択を修正</div>
                                </div>
                                <div className="mt-[20px] -ml-[2px] w-[515px] border-t-[3px] border-x-2 border-b-2 border-[#777] border-t-[#8a8a8a] grid grid-cols-[137px_171px_203px] text-[#222] bg-white">
                                    <div className="h-[24px] bg-[#efefef] border-t-2 border-b-[3px] border-[#333] border-r-2 border-r-[#333] text-[18px] flex items-center justify-center">ﾊﾟﾗﾒｰﾀ名</div>
                                    <div className="h-[24px] bg-[#efefef] border-t-2 border-b-[3px] border-[#333] border-r-2 border-r-[#333] text-[19.500px] flex items-center justify-center">実際の値</div>
                                    <div className="h-[24px] bg-[#efefef] border-t-2 border-b-[3px] border-[#333] text-[18px] flex items-center justify-center">望ましい値</div>
                                    <div className="h-[44px] bg-[#f2f2f2] border-r-2 border-[#777] text-[19.500px] leading-[21px] flex flex-col items-center justify-center tracking-[-0.5px]">
                                        <span>ﾄﾞｷｭﾒﾝﾄの設定</span>
                                        <span>を使用</span>
                                    </div>
                                    <div className="h-[44px] border-r-2 border-[#777] text-[18px] text-[#d01c1c] flex items-center justify-center">いいえ</div>
                                    <div className="h-[44px] bg-[linear-gradient(to_right,#fff_85%,#e8e8e8)] text-[18px] flex items-center justify-center">はい</div>
                                </div>
                            </div>
                            <div className="flex-1 bg-[linear-gradient(to_right,#e0e3ec_94%,#d3d6de)]" />
                        </div>
                    </div>
                </div>
            </div>

            <Callout
                className="left-[275px] top-[814px] w-[1628px] h-[165px] pb-[6px] text-[82px] tracking-[-5px]"
                tail="0,32 93,0 0,72"
                tailClass="left-[1622px] top-[-6px] w-[93px] h-[72px]"
            >
                規格が異なるエンティティがリストされます
            </Callout>
            <Callout
                className="left-[1765px] top-[1357px] w-[685px] h-[164px] pb-[6px] text-[90px] tracking-[-4px]"
                tail="397,96 390,0 566,96"
                tailClass="left-0 top-[-96px] w-[600px] h-[96px]"
            >
                自動修正ツール
            </Callout>
        </div>
    );
}
